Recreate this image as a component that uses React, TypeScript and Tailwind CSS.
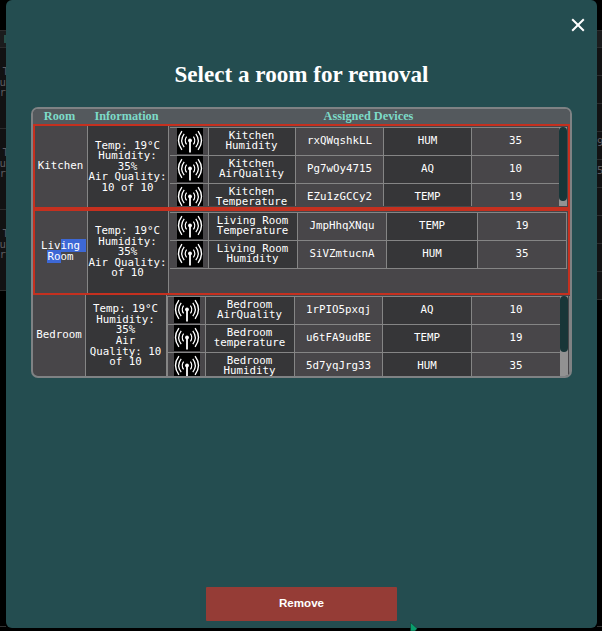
import React from "react";

type Device = { name: [string, string]; id: string; kind: string; value: string };

const kitchen: Device[] = [
  { name: ["Kitchen", "Humidity"], id: "rxQWqshkLL", kind: "HUM", value: "35" },
  { name: ["Kitchen", "AirQuality"], id: "Pg7wOy4715", kind: "AQ", value: "10" },
  { name: ["Kitchen", "Temperature"], id: "EZu1zGCCy2", kind: "TEMP", value: "19" },
];
const living: Device[] = [
  { name: ["Living Room", "Temperature"], id: "JmpHhqXNqu", kind: "TEMP", value: "19" },
  { name: ["Living Room", "Humidity"], id: "SiVZmtucnA", kind: "HUM", value: "35" },
];
const bedroom: Device[] = [
  { name: ["Bedroom", "AirQuality"], id: "1rPIO5pxqj", kind: "AQ", value: "10" },
  { name: ["Bedroom", "temperature"], id: "u6tFA9udBE", kind: "TEMP", value: "19" },
  { name: ["Bedroom", "Humidity"], id: "5d7yqJrg33", kind: "HUM", value: "35" },
];

function Antenna() {
  return (
    <svg width="26" height="26" viewBox="0 0 26 26" fill="none" stroke="#fff" className="block bg-black">
      <path d="M13 13V24.6" strokeWidth="1.8" />
      <circle cx="13" cy="12.5" r="1.9" fill="#fff" stroke="none" />
      <path d="M9.6 8.6Q6.8 12.5 9.6 16.4M16.4 8.6Q19.2 12.5 16.4 16.4" strokeWidth="1.2" />
      <path d="M7.2 5.8Q2.2 12.5 7.2 19.2M18.8 5.8Q23.8 12.5 18.8 19.2" strokeWidth="1.3" />
      <path d="M4.9 3.2Q-1.9 12.5 4.9 21.8M21.1 3.2Q27.9 12.5 21.1 21.8" strokeWidth="1.4" />
    </svg>
  );
}

function Devices({ items, cols }: { items: Device[]; cols: string }) {
  return (
    <div className="flex flex-col">
      {items.map((d) => (
        <div key={d.id} className={`grid h-[28.2px] shrink-0 border-t border-[#858585] text-center ${cols}`}>
          <div className="flex items-start justify-center bg-[#484649] pl-px">
            <Antenna />
          </div>
          <div className="flex flex-col justify-center border-l border-[#858585] bg-[#363638] pr-px pb-px">
            <span>{d.name[0]}</span>
            <span>{d.name[1]}</span>
          </div>
          <div className="flex items-center justify-center border-l border-[#858585] bg-[#484649] pb-px">{d.id}</div>
          <div className="flex items-center justify-center border-l border-[#858585] bg-[#363638] pb-px">{d.kind}</div>
          <div className="flex items-center justify-center border-l border-[#858585] bg-[#484649] pb-px">{d.value}</div>
        </div>
      ))}
    </div>
  );
}

function Info({ lines }: { lines: string[] }) {
  return (
    <div className="flex flex-col items-center justify-center whitespace-nowrap bg-[#363638] pt-px pr-px">
      {lines.map((l) => (
        <span key={l}>{l}</span>
      ))}
    </div>
  );
}

const rightEdge = ["", "", "", "9", "5", "", "", "", ""];

function Gutter({ side }: { side: "left" | "right" }) {
  const left = side === "left";
  return (
    <div
      className={`flex shrink-0 flex-col overflow-hidden bg-black font-['DejaVu_Sans_Mono',monospace] text-[10.7px] leading-[10.6px] text-[#5c5c60] ${left ? "w-1.5" : "w-[5px]"}`}
    >
      <div className="mt-[30px] flex h-[18px] shrink-0 justify-end border-y border-[#2b2c2d] bg-[#1b1c1d]">
        {left && <div className="mt-1 h-2 w-[2px] bg-[#28504b]" />}
      </div>
      {left
        ? [0, 1, 2].map((i) => (
            <div key={i} className="flex h-[81px] shrink-0 flex-col items-end border-b border-[#2b2c2d] bg-[#121213] pt-[19px]">
              <span className="-mr-[3px]">T</span>
              <span>u</span>
              <span>r</span>
            </div>
          ))
        : rightEdge.map((t, i) => (
            <div key={i} className="h-[28px] shrink-0 border-b border-[#2b2c2d] bg-[#121213] pt-[6px]">
              {t}
            </div>
          ))}
      <div className="grow bg-black" />
      <div className="h-[5px] shrink-0 border-t border-[#333]" />
    </div>
  );
}

export default function App() {
  return (
    <div className="flex h-[631px] w-[602px] overflow-hidden bg-black">
      <Gutter side="left" />
      <main className="relative flex h-[628px] w-[591px] shrink-0 flex-col rounded-[6px] bg-[#244d50]">
        <div className="flex h-[60px] shrink-0 justify-end pt-[18px] pr-[12px]">
          <svg width="14" height="14" viewBox="0 0 14 14" stroke="#fff" strokeWidth="2" fill="none">
            <path d="M1.2 1.2L12.8 12.8M12.8 1.2L1.2 12.8" />
          </svg>
        </div>
        <h1 className="h-[47px] shrink-0 text-center font-['Liberation_Serif',serif] text-[23.1px] leading-[28px] font-bold text-white">
          Select a room for removal
        </h1>
        <section className="ml-[25px] flex h-[271px] w-[541px] shrink-0 flex-col overflow-hidden rounded-[7px] border-2 border-[#7f8284] bg-[#484649] font-['DejaVu_Sans_Mono',monospace] text-[10.8px] leading-[10.6px] text-white">
          <header className="grid h-[15px] shrink-0 grid-cols-[53px_81px_403px] bg-[#54595d] text-center font-['Liberation_Serif',serif] text-[12.3px] leading-[15px] font-bold text-[#7ddbc8]">
            <span>Room</span>
            <span>Information</span>
            <span>Assigned Devices</span>
          </header>

          <div className="grid h-[85px] shrink-0 grid-cols-[52px_82px_399px] border-2 border-[#c5301f]">
            <div className="flex items-center justify-center pr-px">Kitchen</div>
            <div className="grid border-x border-[#858585]">
              <Info lines={["Temp: 19°C", "Humidity:", "35%", "Air Quality:", "10 of 10"]} />
            </div>
            <div className="flex h-[81px] overflow-hidden pt-px pb-px pl-px">
              <div className="w-[389px] overflow-hidden">
                <Devices items={kitchen} cols="grid-cols-[38px_87px_88px_88px_88px]" />
              </div>
              <div className="w-2 bg-[#929292]">
                <div className="h-[74px] rounded-[4px] bg-[#183638]" />
              </div>
            </div>
          </div>

          <div className="grid h-[86px] shrink-0 grid-cols-[52px_82px_399px] border-2 border-[#c5301f]">
            <div className="flex flex-col items-center justify-center pr-px whitespace-nowrap">
              <span>
                Liv<span className="-mr-[6px] bg-[#3d68d6] pr-[6px]">ing</span>
              </span>
              <span>
                <span className="bg-[#3d68d6]">Ro</span>om
              </span>
            </div>
            <div className="grid border-x border-[#858585]">
              <Info lines={["Temp: 19°C", "Humidity:", "35%", "Air Quality:", "of 10"]} />
            </div>
            <div className="pt-px pl-px">
              <div className="w-[397px] border-r border-b border-[#858585]">
                <Devices items={living} cols="grid-cols-[38px_89px_89px_91px_89px]" />
              </div>
            </div>
          </div>

          <div className="grid h-[81px] shrink-0 grid-cols-[52px_82px_403px]">
            <div className="flex items-center justify-center">Bedroom</div>
            <div className="grid border-x border-[#858585]">
              <Info lines={["Temp: 19°C", "Humidity:", "35%", "Air", "Quality: 10", "of 10"]} />
            </div>
            <div className="flex h-[81px] overflow-hidden pt-px">
              <div className="w-[393px] overflow-hidden border-l border-[#858585]">
                <Devices items={bedroom} cols="grid-cols-[37px_89px_88px_89px_89px]" />
              </div>
              <div className="w-2 bg-[#929292]">
                <div className="h-14 rounded-[4px] bg-[#183638]" />
              </div>
              <div className="ml-px grow bg-[#7f8284]" />
            </div>
          </div>
        </section>
        <div className="grow" />
        <button className="mb-[7px] ml-[200px] h-[34px] w-[191px] shrink-0 rounded-[1px] bg-[#953c36] pb-[2px] font-['Liberation_Sans',sans-serif] text-[11.6px] leading-[32px] font-bold text-white">
          Remove
        </button>
        <svg className="absolute top-[622px] left-[404px]" width="9" height="9" viewBox="0 0 9 9">
          <path d="M0.5 0.5V9H5L7.2 6.6Z" fill="#0a9d6c" stroke="#12302a" strokeWidth=".5" />
        </svg>
      </main>
      <Gutter side="right" />
    </div>
  );
}
